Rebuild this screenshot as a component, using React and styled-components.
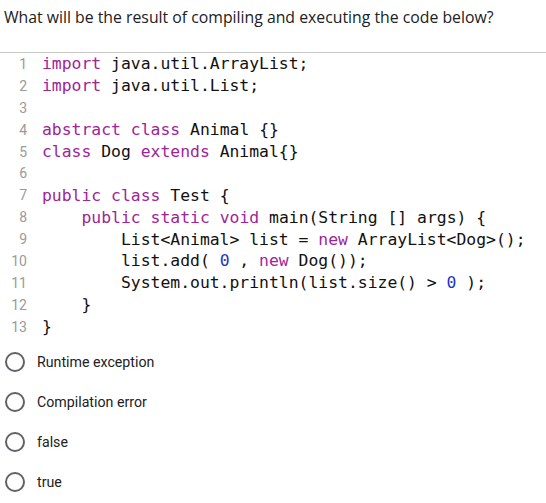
import styled, { createGlobalStyle } from "styled-components";

const GlobalStyle = createGlobalStyle`
  body {
    margin: 0;
    background: #fff;
    font-family: Roboto, "Noto Sans", sans-serif;
  }
`;

const Wrapper = styled.section`
  width: 546px;
  height: 503px;
  overflow: hidden;

  .question {
    margin: 0;
    padding: 7px 0 0 4px;
    font-family: "Open Sans", Roboto, sans-serif;
    font-size: 15.8px;
    font-weight: 400;
    color: #202124;
    line-height: 20px;
  }

  .code {
    margin-top: 25px;
    border-top: 1px solid #c8c8c8;
    padding-top: 0;
  }

  .options {
    margin-top: 14px;
    display: flex;
    flex-direction: column;
    gap: 20px;
    padding-left: 5px;
  }
`;

const CodeLine = styled.div`
  display: flex;
  height: 21.9px;
  align-items: center;
  font-family: "DejaVu Sans Mono", "Liberation Mono", monospace;
  font-size: 16.4px;
  color: #111;
  white-space: pre;

  .num {
    width: 27px;
    text-align: right;
    font-family: Roboto, sans-serif;
    font-size: 14px;
    color: #9a9a9a;
    margin-right: 15px;
  }

  .kw {
    color: #a0239a;
  }

  .lit {
    color: #1c36c9;
  }
`;

const Option = styled.label`
  display: flex;
  align-items: center;
  gap: 12px;
  height: 20px;
  font-size: 14.2px;
  color: #202124;

  .radio {
    width: 16px;
    height: 16px;
    border: 2px solid #5f6368;
    border-radius: 50%;
  }
`;

const K = ({ children }) => <span className="kw">{children}</span>;
const N = ({ children }) => <span className="lit">{children}</span>;

const lines = [
  <><K>import</K> java.util.ArrayList;</>,
  <><K>import</K> java.util.List;</>,
  <></>,
  <><K>abstract</K> <K>class</K> Animal {"{}"}</>,
  <><K>class</K> Dog <K>extends</K> Animal{"{}"}</>,
  <></>,
  <><K>public</K> <K>class</K> Test {"{"}</>,
  <>    <K>public</K> <K>static</K> <K>void</K> main(String [] args) {"{"}</>,
  <>        List&lt;Animal&gt; list = <K>new</K> ArrayList&lt;Dog&gt;();</>,
  <>        list.add( <N>0</N> , <K>new</K> Dog());</>,
  <>        System.out.println(list.size() &gt; <N>0</N> );</>,
  <>    {"}"}</>,
  <>{"}"}</>,
];

const options = ["Runtime exception", "Compilation error", "false", "true"];

const App = () => {
  return (
    <Wrapper>
      <GlobalStyle />
      <p className="question">What will be the result of compiling and executing the code below?</p>
      <div className="code">
        {lines.map((l, i) => (
          <CodeLine key={i}>
            <span className="num">{i + 1}</span>
            <span>{l}</span>
          </CodeLine>
        ))}
      </div>
      <div className="options">
        {options.map((o) => (
          <Option key={o}>
            <span className="radio" />
            {o}
          </Option>
        ))}
      </div>
    </Wrapper>
  );
};

export default App;
